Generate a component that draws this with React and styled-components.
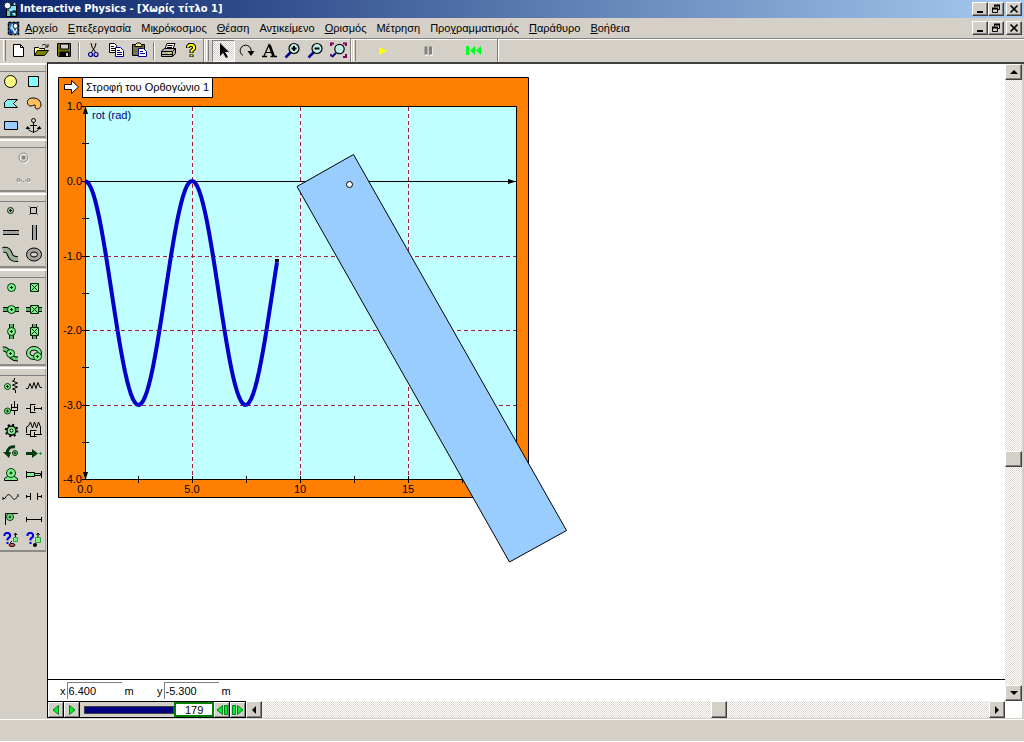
import React from "react";
import styled, { createGlobalStyle, css } from "styled-components";

const face = "#d4d0c8";
const uiFont = '"Liberation Sans", Arial, sans-serif';
const titleFont = '"DejaVu Sans Condensed", "DejaVu Sans", sans-serif';

const Global = createGlobalStyle`
  * { box-sizing: border-box; }
  body { margin: 0; background: ${face}; font-family: ${uiFont}; font-size: 11px; color: #000; }
  button, input { font: inherit; color: inherit; border-radius: 0; }
  svg { display: block; flex: none; }
`;

const raised = css`
  border: 1px solid;
  border-color: #fff #404040 #404040 #fff;
  box-shadow: inset -1px -1px 0 #808080;
  background: ${face};
`;

const Window = styled.div`
  display: flex;
  flex-direction: column;
  min-height: 100vh;
`;

const TitleBar = styled.header`
  display: flex;
  align-items: center;
  gap: 3px;
  height: 18px;
  padding: 0 2px 0 3px;
  background: linear-gradient(90deg, #0a246a, #a6caf0);
  color: #fff;
`;

const Title = styled.h1`
  flex: 1;
  margin: 0;
  font-family: ${titleFont};
  font-size: 11px;
  line-height: 16px;
  font-weight: bold;
  white-space: nowrap;
`;

const CaptionButtons = styled.div`
  display: flex;
  margin-left: auto;
`;

const CaptionButton = styled.button`
  ${raised}
  display: flex;
  align-items: center;
  justify-content: center;
  width: 16px;
  height: 14px;
  padding: 0;
  margin-left: ${(p) => (p.$apart ? "2px" : "0")};
`;

const MenuBar = styled.nav`
  display: flex;
  align-items: center;
  height: 20px;
  padding: 0 2px 0 7px;
  background: ${face};
`;

const MenuItem = styled.button`
  border: 0;
  padding: 0 5px;
  background: none;
  line-height: 16px;
  white-space: nowrap;
`;

const Toolbar = styled.div`
  display: flex;
  height: 24px;
  border-top: 1px solid #808080;
  box-shadow: inset 0 1px 0 #fff;
  background: ${face};
`;

const ToolGroup = styled.div`
  display: flex;
  align-items: center;
  padding-left: ${(p) => (p.$first ? "3px" : "2px")};
  border-right: 1px solid #808080;
  box-shadow: 1px 0 0 #fff;
`;

const Grip = styled.i`
  width: 3px;
  height: 21px;
  margin-right: ${(p) => p.$gap || 1}px;
  border-left: 1px solid #fff;
  border-right: 1px solid #808080;
`;

const ToolButton = styled.button`
  display: flex;
  align-items: center;
  justify-content: center;
  width: ${(p) => (p.$wide ? 46 : 23)}px;
  height: 22px;
  padding: 0;
  border: 1px solid transparent;
  background: none;
  ${(p) =>
    p.$pressed &&
    css`
      border-color: #808080 #fff #fff #808080;
      background: repeating-conic-gradient(#fff 0 25%, ${face} 0 50%) 0 0 / 2px 2px;
    `}
`;

const ToolDivider = styled.i`
  width: 2px;
  height: 18px;
  margin: 0 2px;
  border-left: 1px solid #808080;
  border-right: 1px solid #fff;
`;

const Body = styled.main`
  display: flex;
  flex: 1;
`;

const Palette = styled.aside`
  width: 47px;
  flex: none;
  background: ${face};
`;

const PaletteGroup = styled.section`
  display: grid;
  grid-template-columns: ${(p) => (p.$single ? "46px" : "23px 23px")};
  grid-template-rows: 8px;
  grid-auto-rows: 22px;
  width: 46px;
  border-bottom: 2px solid #8c8a84;
  border-right: 1px solid #a8a49c;
  &::before {
    content: "";
    grid-column: 1 / -1;
    height: 6px;
    margin-top: 1px;
    border-top: 2px solid #fff;
    border-bottom: 1px solid #808080;
  }
`;

const PaletteButton = styled.button`
  display: flex;
  align-items: center;
  justify-content: center;
  padding: 0;
  border: 0;
  background: none;
`;

const Workspace = styled.div`
  display: flex;
  flex: 1;
  min-width: 0;
  border-top: 2px solid #404040;
  border-left: 1px solid #000;
  background: #fff;
`;

const Document = styled.div`
  display: flex;
  flex-direction: column;
  flex: 1;
  min-width: 0;
`;

const Canvas = styled.div`
  position: relative;
  flex: 1;
  min-height: 520px;
  border-bottom: 1px solid #000;
`;

const Meter = styled.figure`
  position: absolute;
  left: 10px;
  top: 13px;
  margin: 0;
`;

const MeterTitle = styled.figcaption`
  position: absolute;
  left: 24px;
  top: 0;
  padding: 0 3px;
  border: 1px solid #000;
  background: #fff;
  line-height: 19px;
  white-space: nowrap;
`;

const Beam = styled.svg`
  position: absolute;
  left: 248px;
  top: 89px;
`;

const CoordinateBar = styled.div`
  display: flex;
  align-items: center;
  height: 21px;
  padding-left: 12px;
`;

const Coordinate = styled.label`
  display: flex;
  align-items: center;
  width: 97px;
`;

const CoordinateInput = styled.input`
  width: 55px;
  height: 17px;
  margin: 0 3px 0 1px;
  padding: 0 1px;
  border: 0;
  border-top: 1px solid #808080;
  border-left: 1px solid #808080;
  background: #fff;
`;

const TapeBar = styled.div`
  display: flex;
  height: 17px;
`;

const TapePlayer = styled.div`
  display: flex;
  border-top: 1px solid #000;
  border-bottom: 1px solid #000;
  background: ${face};
`;

const TapeButton = styled.button`
  display: flex;
  align-items: center;
  justify-content: center;
  width: 16px;
  padding: 0;
  border: 0;
  border-right: 1px solid #000;
  background: ${face};
  box-shadow: inset 1px 1px 0 #fff, inset -1px -1px 0 #808080;
`;

const TapeSlider = styled.input`
  appearance: none;
  width: 90px;
  height: 8px;
  margin: 4px 0 0 4px;
  background: #000080;
  border: 1px solid #404040;
  &::-webkit-slider-thumb { appearance: none; width: 1px; height: 5px; background: #000080; }
`;

const FrameCounter = styled.output`
  width: 40px;
  padding-left: 9px;
  border: 2px solid #008000;
  background: #fff;
  line-height: 12px;
`;

const Track = styled.div`
  display: flex;
  flex: ${(p) => (p.$grow ?? 1)} 1 0;
  background: repeating-conic-gradient(#fff 0 25%, #dcd9d2 0 50%) 0 0 / 2px 2px;
`;

const ScrollButton = styled.button`
  ${raised}
  display: flex;
  flex: none;
  align-items: center;
  justify-content: center;
  width: ${(p) => (p.$vertical ? 17 : 16)}px;
  height: ${(p) => (p.$vertical ? 16 : 17)}px;
  padding: 0;
`;

const VerticalScroll = styled.div`
  display: flex;
  flex-direction: column;
  width: 19px;
  padding-bottom: 17px;
  border-right: 2px solid ${face};
`;

const StatusBar = styled.footer`
  height: 24px;
  padding: 1px 0 2px;
  background: ${face};
  &::before {
    content: "";
    display: block;
    height: 21px;
    border-top: 1px solid #fff;
    border-bottom: 1px solid #fff;
  }
`;

/* ---------- icons ---------- */

const Icon = ({ w = 17, h = 17, children }) => (
  <svg width={w} height={h} viewBox={`0 0 ${w} ${h}`} fill="none" stroke="#000" aria-hidden="true">
    {children}
  </svg>
);

const AppIcon = () => (
  <Icon w={14} h={16}>
    <path d="M3.500 4.500h10v11h-10z" fill="#208080" />
    <path d="M8 5h5v4H8z" fill="#80e0f0" stroke="none" />
    <path d="M4 10h4v5H4z" fill="#60d0a0" stroke="none" />
    <path d="M5 6l7 8" stroke="#e0f0ff" strokeWidth="1.500" />
    <path d="M8 15v-4h5" stroke="#001850" strokeWidth="1.500" />
    <circle cx="4.500" cy="4.500" r="3.300" fill="#f4f8ff" stroke="#102030" />
    <circle cx="11.500" cy="3" r="1.500" fill="#b0f0ff" stroke="#102030" strokeWidth=".8" />
  </Icon>
);

const DocumentIcon = () => (
  <Icon w={13} h={16}>
    <path d="M1 2h11v12H1z" fill="#3a6ea8" stroke="none" />
    <path d="M1.500 2.500h10v12h-10z" strokeDasharray="3 1" strokeWidth="1.500" />
    <path d="M3 9l2-5h4l-3 6z" fill="#a0e8f8" stroke="none" />
    <path d="M3 13V9l3 4z" fill="#0030d0" stroke="none" />
    <circle cx="8.500" cy="6" r="2.500" fill="#f0fcff" stroke="#102030" />
    <path d="M6 9l2 4 2-4" stroke="#fff" strokeWidth="1.200" />
  </Icon>
);

const captionGlyphs = {
  Minimize: <path d="M2 8h6" strokeWidth="2" />,
  Restore: (
    <>
      <path d="M3.500 3V1.500h5v4H7" />
      <path d="M3 1.500h6M1 4.500h6" strokeWidth="2" />
      <path d="M1.500 4.500h5v4h-5z" />
    </>
  ),
  Close: <path d="M1.500 1.500l7 7M8.500 1.500l-7 7" strokeWidth="1.600" />,
};

const Caption = () => (
  <CaptionButtons>
    {Object.keys(captionGlyphs).map((name) => (
      <CaptionButton key={name} aria-label={name} $apart={name === "Close"}>
        <Icon w={10} h={10}>{captionGlyphs[name]}</Icon>
      </CaptionButton>
    ))}
  </CaptionButtons>
);

const Lens = ({ children }) => (
  <>
    <path d="M6.500 10.500l-5 5" stroke="#000090" strokeWidth="2.500" />
    <circle cx="10" cy="6.500" r="5" fill="#c0ece8" strokeWidth="1.200" />
    {children}
  </>
);

const toolIcons = {
  New: <path d="M3.500 2.500h7l3 3v9h-10zM10.500 2.500v3h3" fill="#fff" />,
  Open: (
    <>
      <path d="M1.500 13.500v-8h4l1 1h5v3" fill="#ffff90" />
      <path d="M1.500 13.500l3-5h11l-4 5z" fill="#808000" />
      <path d="M9 3.500c2-2 4-1 5 1M15 2v3h-3" />
    </>
  ),
  Save: (
    <>
      <path d="M1.500 1.500h13v13h-12l-1-1z" fill="#707000" />
      <path d="M4.500 2h8v5h-8z" fill={face} />
      <path d="M4 10h9v4H4z" fill="#000" />
      <path d="M11 11v3" stroke={face} strokeWidth="2" />
    </>
  ),
  Cut: (
    <>
      <path d="M6 1l1 4 4 6M11 1l-1 4-4 6" />
      <circle cx="5.500" cy="12.500" r="2" stroke="#000090" strokeWidth="1.200" />
      <circle cx="11" cy="12.500" r="2" stroke="#000090" strokeWidth="1.200" />
    </>
  ),
  Copy: (
    <>
      <path d="M1.500 1.500h5l2 2v7h-7z" fill="#fff" />
      <path d="M3 4.500h3M3 6.500h4M3 8.500h4" />
      <path d="M7.500 5.500h5l3 3v6h-8z" fill="#fff" stroke="#000090" />
      <path d="M9 8.500h3M9 10.500h5M9 12.500h5" stroke="#000090" />
    </>
  ),
  Paste: (
    <>
      <path d="M1.500 2.500h12v11h-12z" fill="#78763c" />
      <path d="M4 4.500V3l2-2h3l2 2v1.500z" fill="#f8f080" />
      <path d="M7.500 6.500h5l3 3v5h-8z" fill="#fff" stroke="#000090" />
      <path d="M9 9.500h3M9 11.500h5" stroke="#000090" />
    </>
  ),
  Print: (
    <>
      <path d="M5 7l2-5.500h8L13 7z" fill="#fff" />
      <path d="M7.500 3.500h5M7 5.500h5" />
      <path d="M1.500 9l3-2.500h11v5l-3 3h-11z" fill="#b8b4ac" />
      <path d="M1.500 9.500h11v5M12.500 9.500l3-3M2 12.500h10" />
      <path d="M8 11h3" stroke="#ffff00" />
    </>
  ),
  Help: (
    <>
      <path d="M5 6V4.500L6.500 3h3L11 4.500v2L8.500 9v2M8.500 12.500v2.500" strokeWidth="4" />
      <path d="M5 5.500v-1L6.500 3h3L11 4.500v2L8.500 9v1.500M8.500 13v1.500" stroke="#ffff00" strokeWidth="2" />
    </>
  ),
  Select: <path d="M5 1v13l3-3 3 5 2-1-3-5h4z" fill="#000" stroke="none" />,
  Rotate: (
    <>
      <path d="M5 13.500a5.500 5.500 0 1 1 8-3.500" />
      <path d="M9.500 9h7L13 14z" fill="#000" stroke="none" />
    </>
  ),
  Text: (
    <>
      <path d="M3 14L8 2.500 13 14M5 10.500h5" strokeWidth="1.200" />
      <path d="M8.500 3l4 11" strokeWidth="2.600" />
      <path d="M1 14.500h5M9.500 14.500H16" strokeWidth="1.500" />
    </>
  ),
  "Zoom in": <Lens><path d="M7.500 6.500h5M10 4v5" strokeWidth="2" /></Lens>,
  "Zoom out": <Lens><path d="M7.500 6.500h5" strokeWidth="2" /></Lens>,
  "Zoom to fit": (
    <>
      <path d="M6 11l-4 4" stroke="#000090" strokeWidth="2" />
      <circle cx="9.500" cy="7" r="4.700" fill="#c0ece8" strokeWidth="1.200" />
      <path d="M1 4V1.500h3M13 1.500h3V4M1 12v2.500M13 15h3v-3" stroke="#800060" strokeWidth="2" />
    </>
  ),
  Run: <path d="M5 5l8 4-8 4z" fill="#ffff00" stroke="none" />,
  Pause: (
    <>
      <path d="M6.500 5v9M11.500 5v9" stroke="#fff" strokeWidth="2" />
      <path d="M6 4.500v8M10.500 4.500v8" stroke="#808080" strokeWidth="3" />
    </>
  ),
  Reset: (
    <path d="M0 4h3v9H0zM9 4v9L4 8.500zM15 4v9l-5-4.500z" fill="#00ff20" stroke="none" />
  ),
};

const Tools = ({ names, wide, pressed }) =>
  names.map((name) => (
    <ToolButton key={name} aria-label={name} $wide={wide} $pressed={pressed === name}>
      <Icon>{toolIcons[name]}</Icon>
    </ToolButton>
  ));

const green = "#7ef08e";
const Disc = ({ x = 9.5, y = 9.5, r = 4, fill = green }) => (
  <>
    <circle cx={x} cy={y} r={r} fill={fill} stroke="#003800" />
    <path d={`M${x - 1.5} ${y}h3M${x} ${y - 1.5}v3`} stroke="#002000" />
  </>
);
const Crossed = ({ x, y }) => (
  <>
    <path d={`M${x} ${y}h8v8h-8z`} fill={green} stroke="#002800" />
    <path d={`M${x + 1} ${y + 1}l6 6m0-6l-6 6`} stroke="#002800" />
  </>
);
const Query = () => (
  <path d="M2.500 6V4.500L4 3h2.500L8 4.500v2L5.500 9v1.500M5.500 12v2" stroke="#0000e0" strokeWidth="2" />
);

const paletteGroups = [
  {
    Circle: <circle cx="8.500" cy="9.500" r="6" fill="#ffff88" />,
    Square: <path d="M3.500 4.500h10v10h-10z" fill="#80ffff" />,
    Polygon: <path d="M2.500 13.500v-5l3-3h10l-4 4 4 4z" fill="#80f0f0" />,
    "Curved polygon": (
      <path d="M2.500 9C2 5 5 4 8 4c5 0 8 3 8 7 0 2-2 4-4 4-1 0-2-1-2-2s1-1.500 0-2c-1-.5-2 1-4 1s-3-1-3.500-3z" fill="#ffc060" />
    ),
    Rectangle: <path d="M2.500 5.500h13v8h-13z" fill="#99ccff" />,
    Anchor: (
      <>
        <circle cx="8.500" cy="4.500" r="2" />
        <path d="M8.500 6.500v10M5 9.500h7M2.500 11c0 4 4 4 6 5.500 2-1.500 6-1.500 6-5.500" />
        <path d="M0.500 13l2-3 3 3zM16.500 13l-2-3-3 3z" fill="#000" stroke="none" />
      </>
    ),
  },
  {
    Join: (
      <>
        <circle cx="10.500" cy="10.500" r="4.500" stroke="#fff" />
        <circle cx="9.500" cy="9.500" r="4.500" stroke="#888" />
        <circle cx="9.500" cy="9.500" r="2" fill="#888" stroke="none" />
      </>
    ),
    Split: (
      <>
        <path d="M4 12.500h2M14 12.500h2" stroke="#fff" />
        <circle cx="4.500" cy="10" r="1.500" stroke="#888" />
        <circle cx="14.500" cy="10" r="1.500" stroke="#888" />
        <path d="M7 10.500h1M9 11.500h1M11 10.500h1" stroke="#888" />
      </>
    ),
  },
  {
    "Point element": <Disc x={8.5} y={8.5} r={3} fill="#b8b8b4" />,
    "Square point": (
      <>
        <path d="M5.500 5.500h6v6h-6z" fill="#c8c8c4" />
        <path d="M4 4l1 1M13 4l-1 1M4 13l1-1M13 13l-1-1" stroke="#606060" />
      </>
    ),
    "Horizontal slot": (
      <>
        <path d="M1 8.500h16" stroke="#a0a09c" strokeWidth="3" />
        <path d="M1 6.500h16M1 10.500h16" />
      </>
    ),
    "Vertical slot": (
      <>
        <path d="M9.500 1v15" stroke="#a0a09c" strokeWidth="3" />
        <path d="M7.500 1v15M11.500 1v15" />
      </>
    ),
    "Curved slot": (
      <>
        <path d="M1 4c10-2 3 10 15 9" strokeWidth="6" />
        <path d="M1 4c10-2 3 10 15 9" stroke="#9ab496" strokeWidth="4" />
      </>
    ),
    "Closed slot": (
      <>
        <ellipse cx="9" cy="8.500" rx="7.500" ry="6.500" fill="#a4a4a0" />
        <ellipse cx="9" cy="8.500" rx="3.500" ry="2.500" fill={face} />
      </>
    ),
  },
  {
    "Pin joint": <Disc />,
    "Rigid joint": <Crossed x={5.5} y={5.5} />,
    "Horizontal slot joint": (
      <>
        <path d="M1 9.500h16" stroke="#50b060" strokeWidth="3" />
        <path d="M1 7.500h16M1 11.500h16" />
        <Disc />
      </>
    ),
    "Keyed horizontal slot": (
      <>
        <path d="M1 9.500h16" stroke="#50b060" strokeWidth="3" />
        <path d="M1 7.500h16M1 11.500h16" />
        <Crossed x={5.5} y={5.5} />
      </>
    ),
    "Vertical slot joint": (
      <>
        <path d="M9.500 2v15" stroke="#50b060" strokeWidth="3" />
        <path d="M7.500 2v15M11.500 2v15" />
        <Disc />
      </>
    ),
    "Keyed vertical slot": (
      <>
        <path d="M9.500 2v15" stroke="#50b060" strokeWidth="3" />
        <path d="M7.500 2v15M11.500 2v15" />
        <Crossed x={5.5} y={5.5} />
      </>
    ),
    "Curved slot joint": (
      <>
        <path d="M1 5c8-1 4 10 15 10" strokeWidth="5" />
        <path d="M1 5c8-1 4 10 15 10" stroke="#60d070" strokeWidth="3" />
        <Disc x={8.5} y={9.5} />
      </>
    ),
    "Closed slot joint": (
      <>
        <ellipse cx="9" cy="9" rx="7.500" ry="6.500" fill={green} />
        <ellipse cx="9" cy="9" rx="4" ry="3" fill={face} />
        <Disc x={12.500} y={12.500} />
      </>
    ),
  },
  {
    "Rotational spring": (
      <>
        <Disc x={5.5} y={10.5} r={3} />
        <path d="M12.500 2v2l-2 1 5 2-5 2 5 2-5 2 3 1v3" />
      </>
    ),
    Spring: <path d="M1 12.500h2l2-5 2 5 2-6 2 6 2-6 2 5h2" />,
    "Rotational damper": (
      <>
        <Disc x={5.5} y={13} r={3} />
        <path d="M12.500 3v7M9.500 6v6.500h6V6M10 9.500h5M12.500 12v5" />
      </>
    ),
    Damper: <path d="M1 10.500h4M5.500 6v9M5.500 6.500h5M5.500 14.500h5M9.500 8v5M9.500 10.500h7M16.500 9v3" />,
    Gear: (
      <>
        <circle cx="9.500" cy="10.500" r="5.800" strokeWidth="2" strokeDasharray="2 2.555" />
        <circle cx="9.500" cy="10.500" r="4.500" fill={green} strokeWidth="1.300" />
        <circle cx="9.500" cy="10.500" r="1.500" fill="#fff" />
      </>
    ),
    "Spring damper": (
      <>
        <path d="M1.500 13V7l2-1 2-4 2 6 2-6 2 6 2-6 2 5v8M1 14.500h4M12 14.500h5" />
        <path d="M5.500 10.500h6M5.500 16.500h6M5.500 10v7M9.500 12v4M9.500 14.500h3" />
      </>
    ),
    Torque: (
      <>
        <path d="M13 5C8 4 5 7 5 12" stroke="#003810" strokeWidth="3" />
        <path d="M1 10h8l-2 6z" fill="#003810" stroke="none" />
        <Disc x={13} y={11} r={2.500} />
      </>
    ),
    Force: (
      <>
        <path d="M1 11.500h8" stroke="#003810" strokeWidth="3" />
        <path d="M7 7l6 4.500L7 16z" fill="#003810" stroke="none" />
        <path d="M14 11.500h3M15.500 10v3" stroke="#20a040" />
      </>
    ),
    Motor: (
      <>
        <path d="M2.500 16.500v-2l3-2h7l3 2v2z" fill={green} />
        <Disc x={9} y={9} r={4.500} />
      </>
    ),
    Actuator: (
      <>
        <path d="M1.500 7v7M1.500 8.500h8v4h-8z" fill={green} />
        <path d="M9.500 9.500h6v2h-6zM16.500 7v7" fill={green} />
      </>
    ),
    Rope: <path d="M1 12.500h2c3-6 5-4 7-1s4 2 5-1M1 11v3M16 8v3" />,
    Separator: <path d="M1 10.500h4M5.500 7v7M12.500 7v7M13 10.500h3M1.500 9v3M16.500 9v3" />,
    Pulley: (
      <>
        <path d="M3.500 17V5.500H16" />
        <Disc x={8} y={9} r={3.500} />
      </>
    ),
    Rod: <path d="M1 11.500h16M1.500 9v5M16.500 9v5" />,
    "Define body": (
      <>
        <Query />
        <path d="M11.500 7.500h4v4h-4z" fill={green} stroke="#30a040" />
        <path d="M13.500 3v4M12 5l1.500-2L15 5M10 11l-2 2" />
        <ellipse cx="10" cy="15" rx="3" ry="1.500" fill="#f06060" />
      </>
    ),
    "Define point": (
      <>
        <Query />
        <path d="M10.500 7.500h5v5h-5z" fill={green} stroke="#30a040" />
        <path d="M13 3v4M11.500 5L13 3l1.500 2" />
        <circle cx="10" cy="15" r="2" fill="#000" stroke="none" />
      </>
    ),
  },
];

const Arrow = ({ dir }) => {
  const d = {
    up: "M0 6l4-4 4 4z",
    down: "M0 2l4 4 4-4z",
    left: "M6 0L2 4l4 4z",
    right: "M2 0l4 4-4 4z",
  }[dir];
  return (
    <Icon w={8} h={8}>
      <path d={d} fill="#000" stroke="none" />
    </Icon>
  );
};

const tapeGlyphs = {
  Back: <path d="M8.500 1.500v9L3 6z" />,
  Forward: <path d="M3.500 1.500v9L9 6z" />,
  "Step back": <path d="M6.500 1.500v9L1 6zM8.500 1.500h3v9h-3z" />,
  "Step forward": <path d="M5.500 1.500v9L11 6zM.5 1.500h3v9h-3z" />,
};

const Tape = ({ name }) => (
  <TapeButton aria-label={name}>
    <svg width="12" height="12" viewBox="0 0 12 12" fill="#00f028" stroke="#008020">
      {tapeGlyphs[name]}
    </svg>
  </TapeButton>
);

/* ---------- data ---------- */

const menus = [
  ["", "Α", "ρχείο"],
  ["", "Ε", "πεξεργασία"],
  ["Μι", "κ", "ρόκοσμος"],
  ["", "Θ", "έαση"],
  ["Αν", "τ", "ικείμενο"],
  ["", "Ο", "ρισμός"],
  ["Μέτρηση", "", ""],
  ["Προ", "γ", "ραμματισμός"],
  ["", "Π", "αράθυρο"],
  ["", "Β", "οήθεια"],
];

const yTicks = [["1.0", 106], ["0.0", 181], ["-1.0", 256], ["-2.0", 330], ["-3.0", 405], ["-4.0", 479]];
const xTicks = [["0.0", 85], ["5.0", 192], ["10", 300], ["15", 408]];

const curve = Array.from({ length: 97 }, (_, i) => {
  const x = i * 2;
  const y = 293 - 112 * Math.cos((2 * Math.PI * x) / 107);
  return `${85 + x},${y.toFixed(1)}`;
}).join(" ");

const GridLine = ({ d }) => (
  <>
    <path d={d} stroke="#fff" />
    <path d={d} stroke="#a02038" strokeDasharray="4 3" />
  </>
);

const Plot = () => (
  <svg width="471" height="421" viewBox="58 77 471 421" fontFamily={uiFont} fontSize="11">
    <path d="M58.500 77.500h470v420h-470z" fill="#ff8000" stroke="#000" />
    <path d="M64.500 84.500h7v-4l7 6.500-7 6.500v-4h-7z" fill="#fff" stroke="#000" />
    <path d="M85.500 106.500h431v373h-431z" fill="#bfffff" stroke="#000" />
    {xTicks.slice(1).map(([t, x]) => <GridLine key={t} d={`M${x}.5 107V479`} />)}
    {yTicks.slice(2, 5).map(([t, y]) => <GridLine key={t} d={`M86 ${y}.5H516`} />)}
    <g stroke="#000">
      <path d="M85 181.500H516" />
      {yTicks.map(([t, y]) => <path key={t} d={`M82 ${y}.5h7`} />)}
      {[143, 218, 293, 367, 442].map((y) => <path key={y} d={`M82 ${y}.5h7`} />)}
      {[138, 192, 246, 300, 354, 408, 462].map((x) => <path key={x} d={`M${x}.5 476v7`} />)}
    </g>
    <path d="M83 114l2.500-8 2.500 8zM83 472l2.500 8 2.500-8zM508 179l8 2.500-8 2.500z" />
    {yTicks.map(([t, y]) => <text key={t} x="82" y={y + 4} textAnchor="end">{t}</text>)}
    {xTicks.map(([t, x]) => <text key={t} x={x} y="493" textAnchor="middle">{t}</text>)}
    <text x="92" y="119" fill="#000080">rot (rad)</text>
    <polyline points={curve} fill="none" stroke="#0000c8" strokeWidth="4" strokeLinejoin="round" />
    <path d="M275 259h4v3h-4z" />
  </svg>
);

export default function App() {
  return (
    <>
      <Global />
      <Window>
        <TitleBar>
          <AppIcon />
          <Title>Interactive Physics - [Χωρίς τίτλο 1]</Title>
          <Caption />
        </TitleBar>
        <MenuBar>
          <DocumentIcon />
          {menus.map(([before, key, after]) => (
            <MenuItem key={before + key + after}>
              {before}
              <u>{key}</u>
              {after}
            </MenuItem>
          ))}
          <Caption />
        </MenuBar>
        <Toolbar>
          <ToolGroup $first>
            <Grip />
            <Tools names={["New", "Open", "Save"]} />
            <ToolDivider />
            <Tools names={["Cut", "Copy", "Paste"]} />
            <ToolDivider />
            <Tools names={["Print", "Help"]} />
          </ToolGroup>
          <ToolGroup>
            <Grip $gap={3} />
            <Tools names={["Select", "Rotate", "Text", "Zoom in", "Zoom out", "Zoom to fit"]} pressed="Select" />
          </ToolGroup>
          <ToolGroup>
            <Grip $gap={3} />
            <Tools names={["Run", "Pause", "Reset"]} wide />
          </ToolGroup>
        </Toolbar>
        <Body>
          <Palette>
            {paletteGroups.map((group, i) => (
              <PaletteGroup key={i} $single={i === 1}>
                {Object.keys(group).map((name) => (
                  <PaletteButton key={name} aria-label={name}>
                    <Icon w={19} h={18}>{group[name]}</Icon>
                  </PaletteButton>
                ))}
              </PaletteGroup>
            ))}
          </Palette>
          <Workspace>
            <Document>
              <Canvas>
                <Meter>
                  <Plot />
                  <MeterTitle>Στροφή του Ορθογώνιο 1</MeterTitle>
                </Meter>
                <Beam width="272" height="411" viewBox="296 153 272 411">
                  <path d="M297 186.500L353.500 154.500 566.500 530.500 509.500 562z" fill="#99ccff" stroke="#000" />
                  <circle cx="349.500" cy="184.500" r="3" fill="#fff" stroke="#000" />
                </Beam>
              </Canvas>
              <CoordinateBar>
                <Coordinate>
                  x<CoordinateInput defaultValue="6.400" />m
                </Coordinate>
                <Coordinate>
                  y<CoordinateInput defaultValue="-5.300" />m
                </Coordinate>
              </CoordinateBar>
              <TapeBar>
                <TapePlayer>
                  <Tape name="Back" />
                  <Tape name="Forward" />
                  <TapeSlider type="range" aria-label="Frame" min="0" max="179" defaultValue="179" />
                  <FrameCounter>179</FrameCounter>
                  <Tape name="Step back" />
                  <Tape name="Step forward" />
                </TapePlayer>
                <ScrollButton aria-label="Scroll left"><Arrow dir="left" /></ScrollButton>
                <Track $grow={449} />
                <ScrollButton aria-label="Horizontal position" />
                <Track $grow={262} />
                <ScrollButton aria-label="Scroll right"><Arrow dir="right" /></ScrollButton>
              </TapeBar>
            </Document>
            <VerticalScroll>
              <ScrollButton $vertical aria-label="Scroll up"><Arrow dir="up" /></ScrollButton>
              <Track $grow={371} />
              <ScrollButton $vertical aria-label="Vertical position" />
              <Track $grow={218} />
              <ScrollButton $vertical aria-label="Scroll down"><Arrow dir="down" /></ScrollButton>
            </VerticalScroll>
          </Workspace>
        </Body>
        <StatusBar />
      </Window>
    </>
  );
}
